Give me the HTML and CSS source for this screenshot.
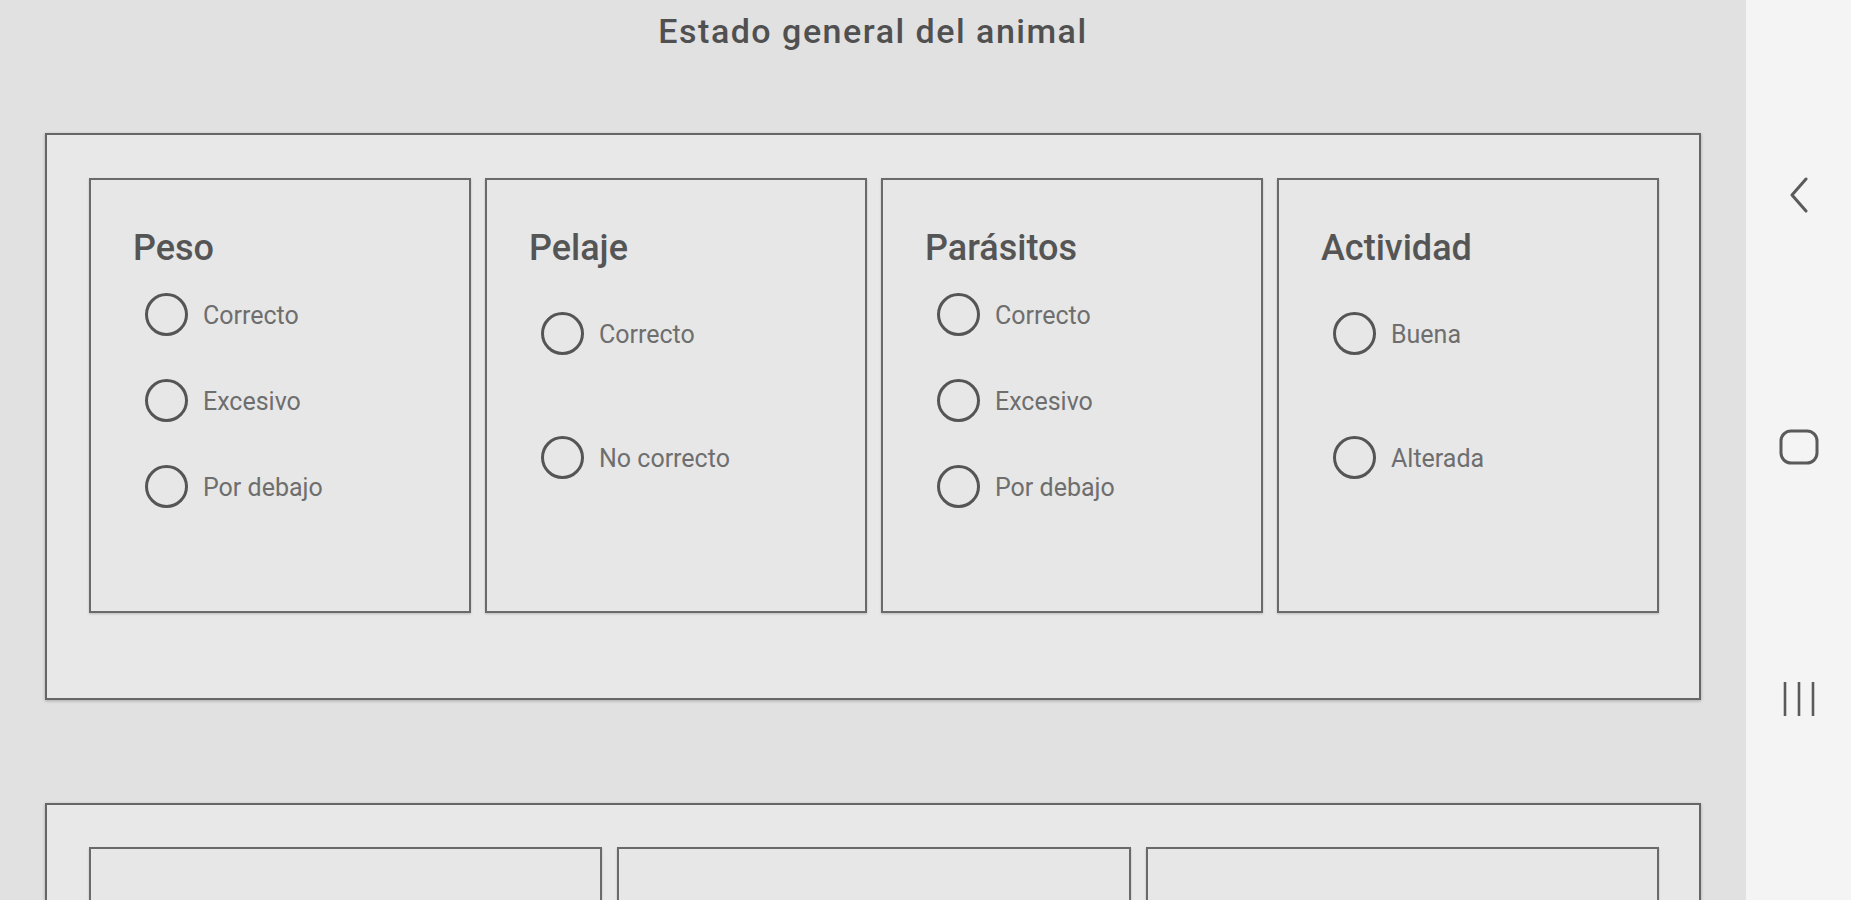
FILE: index.html
```html
<!DOCTYPE html>
<html lang="es">
<head>
<meta charset="utf-8">
<title>Estado general del animal</title>
<link rel="stylesheet" href="styles.css">
</head>
<body>
<div class="screen">
  <main class="main">
    <h1 class="page-title">Estado general del animal</h1>

    <section class="panel">
      <div class="cards cards-4">
        <div class="card">
          <h2 class="card-title">Peso</h2>
          <div class="radio-group group-3">
            <label class="radio"><span class="dot"></span><span class="radio-label">Correcto</span></label>
            <label class="radio"><span class="dot"></span><span class="radio-label">Excesivo</span></label>
            <label class="radio"><span class="dot"></span><span class="radio-label">Por debajo</span></label>
          </div>
        </div>
        <div class="card">
          <h2 class="card-title">Pelaje</h2>
          <div class="radio-group group-2">
            <label class="radio"><span class="dot"></span><span class="radio-label">Correcto</span></label>
            <label class="radio"><span class="dot"></span><span class="radio-label">No correcto</span></label>
          </div>
        </div>
        <div class="card">
          <h2 class="card-title">Parásitos</h2>
          <div class="radio-group group-3">
            <label class="radio"><span class="dot"></span><span class="radio-label">Correcto</span></label>
            <label class="radio"><span class="dot"></span><span class="radio-label">Excesivo</span></label>
            <label class="radio"><span class="dot"></span><span class="radio-label">Por debajo</span></label>
          </div>
        </div>
        <div class="card">
          <h2 class="card-title">Actividad</h2>
          <div class="radio-group group-2">
            <label class="radio"><span class="dot"></span><span class="radio-label">Buena</span></label>
            <label class="radio"><span class="dot"></span><span class="radio-label">Alterada</span></label>
          </div>
        </div>
      </div>
    </section>

    <section class="panel panel-second">
      <div class="cards cards-3">
        <div class="card card-tall"></div>
        <div class="card card-tall"></div>
        <div class="card card-tall"></div>
      </div>
    </section>
  </main>

  <nav class="navbar">
    <svg class="nav-icon" width="22" height="36" viewBox="0 0 22 36">
      <polyline points="18,2 4,18 18,34" fill="none" stroke="#5a5a5a" stroke-width="3" stroke-linecap="round" stroke-linejoin="round"/>
    </svg>
    <svg class="nav-icon" width="40" height="36" viewBox="0 0 40 36">
      <rect x="2" y="2" width="36" height="32" rx="10" ry="10" fill="none" stroke="#5a5a5a" stroke-width="3"/>
    </svg>
    <svg class="nav-icon" width="34" height="36" viewBox="0 0 34 36">
      <line x1="3" y1="1" x2="3" y2="35" stroke="#5a5a5a" stroke-width="2.6"/>
      <line x1="17" y1="1" x2="17" y2="35" stroke="#5a5a5a" stroke-width="2.6"/>
      <line x1="31" y1="1" x2="31" y2="35" stroke="#5a5a5a" stroke-width="2.6"/>
    </svg>
  </nav>
</div>
</body>
</html>
```

FILE: styles.css
```css
* {
  box-sizing: border-box;
}

html, body {
  margin: 0;
  padding: 0;
}

body {
  font-family: Roboto, "Noto Sans", "Liberation Sans", sans-serif;
  background: #e1e1e1;
  overflow: hidden;
}

.screen {
  display: flex;
  width: 1851px;
  height: 900px;
  overflow: hidden;
}

.main {
  width: 1746px;
  flex: none;
  background: #e1e1e1;
  padding: 11px 0 0 45px;
  overflow: hidden;
}

.page-title {
  margin: 0 0 82px -45px;
  font-size: 34px;
  line-height: 40px;
  font-weight: 500;
  letter-spacing: 1.5px;
  color: #505050;
  text-align: center;
}

.panel {
  width: 1656px;
  background: #e8e8e8;
  border: 2px solid #666;
  box-shadow: 0 1px 3px rgba(0, 0, 0, 0.25);
  padding: 43px 40px 85px 42px;
}

.panel-second {
  margin-top: 103px;
  padding-top: 42px;
}

.cards {
  display: grid;
}

.cards-4 {
  grid-template-columns: repeat(4, 1fr);
  column-gap: 14px;
}

.cards-3 {
  grid-template-columns: repeat(3, 1fr);
  column-gap: 15px;
}

.card {
  height: 435px;
  background: #e7e7e7;
  border: 2px solid #6a6a6a;
  box-shadow: 0 1px 2px rgba(0, 0, 0, 0.2);
  padding: 47px 20px 0 42px;
  display: flex;
  flex-direction: column;
}

.card-tall {
  height: 300px;
}

.card-title {
  margin: 0;
  font-size: 36px;
  line-height: 42px;
  font-weight: 500;
  color: #555;
}

.radio-group {
  margin-top: 2px;
  display: flex;
  flex-direction: column;
  padding-left: 12px;
}

.group-3 {
  height: 258px;
}

.group-2 {
  height: 248px;
}

.radio {
  flex: 1;
  display: flex;
  align-items: center;
  gap: 15px;
}

.dot {
  width: 43px;
  height: 43px;
  border: 3px solid #555;
  border-radius: 50%;
  flex: none;
}

.radio-label {
  font-size: 25px;
  line-height: 30px;
  color: #6e6e6e;
  padding-top: 3px;
}

.navbar {
  flex: 1;
  background: #f4f4f4;
  display: flex;
  flex-direction: column;
  align-items: center;
  padding-top: 177px;
  gap: 216px;
}

.nav-icon {
  display: block;
}
```
